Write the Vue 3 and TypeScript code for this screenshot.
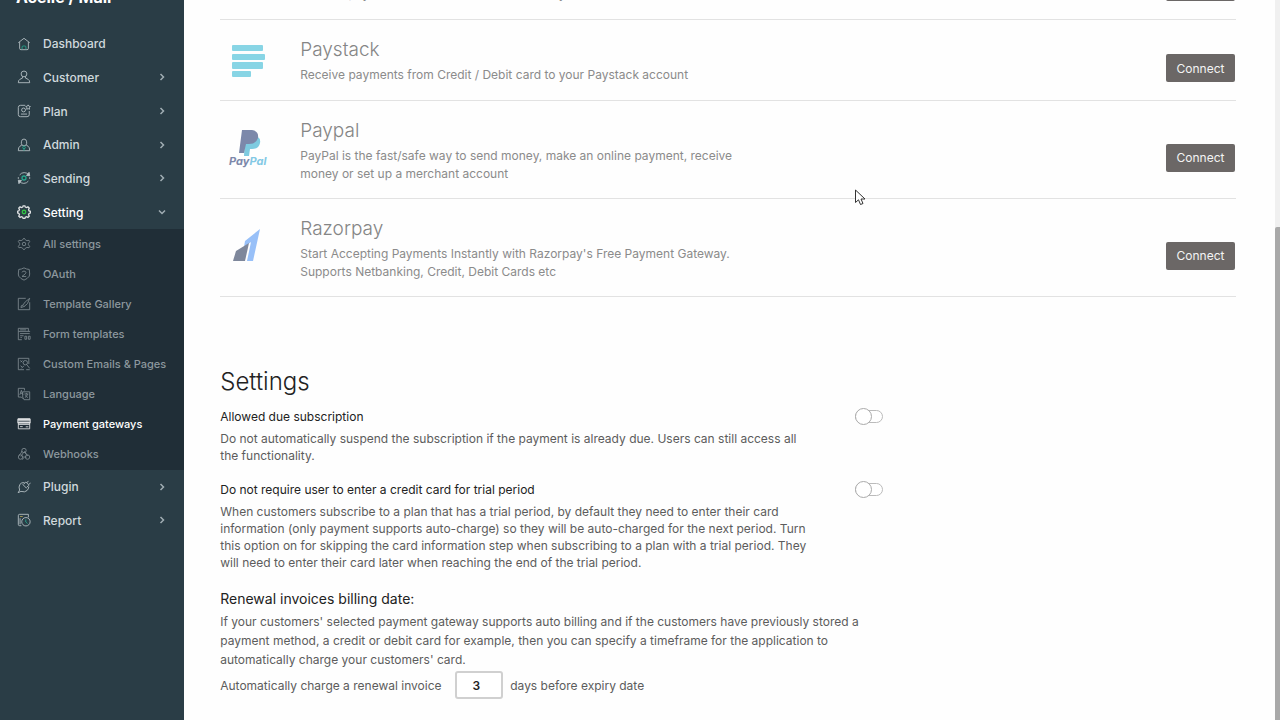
<script setup lang="ts">
interface NavItem {
  label: string
  icon: string
  chevron?: 'right' | 'down'
}

interface Gateway {
  name: string
  logo: 'paystack' | 'paypal' | 'razorpay' | 'none'
  lines: string[]
}

const mainNav: NavItem[] = [
  { label: 'Dashboard', icon: 'home' },
  { label: 'Customer', icon: 'user', chevron: 'right' },
  { label: 'Plan', icon: 'plan', chevron: 'right' },
  { label: 'Admin', icon: 'admin', chevron: 'right' },
  { label: 'Sending', icon: 'sending', chevron: 'right' },
  { label: 'Setting', icon: 'setting', chevron: 'down' },
]

const subNav: NavItem[] = [
  { label: 'All settings', icon: 'gear' },
  { label: 'OAuth', icon: 'oauth' },
  { label: 'Template Gallery', icon: 'template' },
  { label: 'Form templates', icon: 'form' },
  { label: 'Custom Emails & Pages', icon: 'emails' },
  { label: 'Language', icon: 'language' },
  { label: 'Payment gateways', icon: 'card' },
  { label: 'Webhooks', icon: 'webhook' },
]

const endNav: NavItem[] = [
  { label: 'Plugin', icon: 'plugin', chevron: 'right' },
  { label: 'Report', icon: 'report', chevron: 'right' },
]

const icons: Record<string, string> = {
  home: '<path d="M1.5 6.5 8 1.5l6.5 5M3 5.8V13q0 1.5 1.5 1.5h7Q13 14.5 13 13V5.8"/><path class="teal" d="M5.8 14v-2.5q0-1.2 1.2-1.2h2q1.2 0 1.2 1.2V14"/>',
  user: '<circle cx="8" cy="4.5" r="3.3"/><path d="M6.2 7.5v1.8L3.500 10.5Q1.5 11.5 1.5 14.5h13q0-3-2-4L9.8 9.3V7.5"/>',
  plan: '<path d="M9.500 1.5H4Q1.5 1.5 1.5 4v8q0 2.5 2.5 2.5h7.5q2.5 0 2.5-2.5V8M4.5 11.5h7"/><circle cx="7.5" cy="6.8" r="2.2"/><path d="m12.7 1 .9 1.5 1.7.4-1.2 1.3.2 1.8-1.6-.7-1.6.7.2-1.8L10 2.9l1.8-.4z"/>',
  admin: '<path d="M5 6.5V4.3Q5.3 1.2 8 1.2t3 3.1v2.2Q10.5 9 8 9T5 6.5M5.5 8 3.2 9.5Q1.5 10.5 1.5 14.5h13q0-4-1.7-5L10.5 8"/><circle class="teal" cx="8" cy="10.8" r="1.5"/><path class="teal" d="M8 12v2.5"/>',
  sending: '<path d="M3 4.5A6.5 6.5 0 0 1 13.500 4.5M13 11.5A6.5 6.5 0 0 1 2.5 11.5M1.5 7v2M14.5 7v2"/><path class="solid" d="m13.8 1.5.7 4-3.6-.4zM2.2 14.5l-.7-4 3.6.4z"/><circle class="teal thick" cx="8" cy="8" r="2.3"/>',
  setting: '<path class="thick" d="m6.500 2.400.5-1.500h2l.5 1.5 1.500.6 1.5-.8 1.500 1.5-.8 1.5.6 1.500 1.500.5v2l-1.500.5-.6 1.500.8 1.500-1.500 1.500-1.500-.8-1.500.6-.5 1.400H7l-.5-1.400-1.500-.6-1.500.8L2 12.600l.8-1.500-.6-1.500L.8 9.100v-2l1.400-.5.6-1.500L2 3.600l1.500-1.500 1.500.8z"/><circle class="green thick" cx="8" cy="8" r="2"/>',
  gear: '<path d="m6.500 3.200 1.500-2 1.500 2 1.800 1 2.500-.4.7 1.500-1.500 2v1.500l1.500 2-.8 1.500-2.400-.4-1.800 1-1.500 1.900-1.500-1.900-1.800-1-2.500.4-.7-1.500L3 8.800V7.200l-1.500-2 .8-1.400 2.400.4z"/><circle cx="8" cy="8" r="2"/>',
  oauth: '<path d="m8 1 3 1.300 3 .5.5 5.200-.5 2.500q-2 3-6 4.500-4-1.500-6-4.500L1.500 8 2 2.800l3-.5z"/><path d="M5.800 6.200Q6 4.700 8 4.700t2.200 1.600Q10.200 7.500 8 9l-2.300 1.800h4.800"/>',
  template: '<path d="M10 1.500H1.500v13h13V6M14.500 1.500l-5 4-3 4 1.500 1.500 4-3.500zM6.500 9.500Q4.500 9 4.500 12l3.300-1"/>',
  form: '<path d="M13 5V1.500H1.500V5H15M1.500 5v9.500h4M3.500 7.500h11M3.500 10h4M9 10.500h2v3.500H9zM13 10.500h2v3.500h-2zM4 12h1.500M3.500 3.300h7"/>',
  emails: '<path d="M13.500 8V1.500h-12v13H8M4 4l2 2M6 4 4 6M4 10l2 1.500M10.500 14.500h4"/><circle cx="9.500" cy="6.500" r="2.500"/><path d="m11 8.500 3.500 4.500M8 10l-3 3"/>',
  language: '<path d="M8.500 4V1.500h-7v10H5M3.200 9 5 3.800 6.800 9M4 7.200h2"/><path d="M6.500 5.500h8v9H8l-1.500-3zM8.500 8H13M10.700 6.800V8M12 8q-.5 3-3 4M9.500 9.500q1 2 3 2.500M5 11.500l2 2"/>',
  card: '<path class="solid" d="M1 2h14v5H1z"/><path d="M1.500 2.500h13v11h-13zM1.500 8.500h13M3.500 11h3M10 11.200h3"/><path class="dark" d="M1.500 4.800h13"/>',
  webhook: '<circle cx="4" cy="11.500" r="2.500"/><circle cx="12" cy="11.500" r="2.500"/><circle cx="8" cy="4" r="2.500"/><path d="m7.500 6-3 5M9 5.800l3.300 4.500M6.500 11.500H11M5.500 4.500q0 3-3.500 5M8.500 4.500l2 4M5.500 13.500q1.500 1.200 2-.5"/>',
  plugin: '<path d="M8.500 3Q5 2.500 3.300 5q-1.800 3-.3 6.500l-1.700 3L4.500 13q4.500 1.500 7-1 2-2 2-4.500M6.500 5l4.500 4.500M7.500 4.800 10 2.500q2 .5 3.500 3.500L11 8.500M11.500 3l1.500-2M13.500 5l2-1.500"/>',
  report: '<path d="M5 14.500H3Q1.500 14.500 1.500 13V3Q1.500 1.500 3 1.500h10V5M3.500 6v7"/><path class="gold" d="M3.500 4h3"/><circle cx="10.200" cy="10" r="4.800"/><path class="teal" d="M10 7.300v3l2 1.700"/>',
}

const gateways: Gateway[] = [
  { name: 'Braintree', logo: 'none', lines: ['Receive payments from Credit / Debit card to your Braintree account'] },
  { name: 'Paystack', logo: 'paystack', lines: ['Receive payments from Credit / Debit card to your Paystack account'] },
  {
    name: 'Paypal',
    logo: 'paypal',
    lines: ['PayPal is the fast/safe way to send money, make an online payment, receive', 'money or set up a merchant account'],
  },
  {
    name: 'Razorpay',
    logo: 'razorpay',
    lines: ["Start Accepting Payments Instantly with Razorpay's Free Payment Gateway.", 'Supports Netbanking, Credit, Debit Cards etc'],
  },
]
</script>

<template>
  <div class="app">
    <aside class="sidebar">
      <a class="brand" href="#">Acelle / Mail</a>
      <nav>
        <div class="group main-group">
          <a v-for="n in mainNav" :key="n.label" href="#" class="item" :class="{ on: n.chevron === 'down' }">
            <svg class="icon" viewBox="0 0 16 16" v-html="icons[n.icon]"></svg>
            <span>{{ n.label }}</span>
            <svg v-if="n.chevron" class="chevron" :class="n.chevron" viewBox="0 0 8 8"><path d="m2.500 1 3 3-3 3" /></svg>
          </a>
        </div>
        <div class="submenu">
          <a v-for="n in subNav" :key="n.label" href="#" class="sub" :class="{ on: n.icon === 'card' }">
            <svg class="icon" viewBox="0 0 16 16" v-html="icons[n.icon]"></svg>
            <span>{{ n.label }}</span>
          </a>
        </div>
        <div class="group end-group">
          <a v-for="n in endNav" :key="n.label" href="#" class="item">
            <svg class="icon" viewBox="0 0 16 16" v-html="icons[n.icon]"></svg>
            <span>{{ n.label }}</span>
            <svg class="chevron" viewBox="0 0 8 8"><path d="m2.500 1 3 3-3 3" /></svg>
          </a>
        </div>
      </nav>
    </aside>

    <main class="content">
      <section class="gateways">
        <article v-for="g in gateways" :key="g.name" class="gateway">
          <div class="logo" :class="{ tall: g.lines.length > 1 }">
            <svg v-if="g.logo === 'paystack'" width="40" height="40" viewBox="0 0 40 40" fill="#88d5e5">
              <rect x="4" y="4" width="31" height="6" rx="1" />
              <rect x="4" y="13" width="33" height="6" rx="1" />
              <rect x="4" y="21" width="31" height="7" rx="1" />
              <rect x="4" y="30" width="19" height="6" rx="1" />
            </svg>
            <svg v-else-if="g.logo === 'paypal'" width="40" height="40" viewBox="0 0 40 40">
              <path fill="#7ecbe0" d="M17 8h12q4 3 3 7-1 6-8 6h-2l-1 7h-5z" />
              <path fill="#7c88aa" d="M14 2h10q7 1 6 8-2 6-9 6h-3l-2 9h-5z" />
              <text x="1" y="37" class="wordmark" fill="#7c88aa">Pay<tspan fill="#83c9e5">Pal</tspan></text>
            </svg>
            <svg v-else-if="g.logo === 'razorpay'" width="40" height="40" viewBox="0 0 40 40">
              <path fill="#98c0f8" d="M32 3 25 35h-6l4-19-7 5 1-6z" />
              <path fill="#7e879b" d="m21 17-4 18H5l3-10z" />
            </svg>
          </div>
          <div class="details">
            <h3>{{ g.name }}</h3>
            <p><span v-for="l in g.lines" :key="l" class="line">{{ l }}</span></p>
          </div>
          <button type="button" class="connect">Connect</button>
        </article>
      </section>

      <section class="settings">
        <h2>Settings</h2>
        <div class="option">
          <div class="option-text">
            <label for="due">Allowed due subscription</label>
            <p>
              <span class="line">Do not automatically suspend the subscription if the payment is already due. Users can still access all</span>
              <span class="line">the functionality.</span>
            </p>
          </div>
          <input id="due" type="checkbox" role="switch" class="switch" />
        </div>
        <div class="option">
          <div class="option-text">
            <label for="trial">Do not require user to enter a credit card for trial period</label>
            <p>
              <span class="line">When customers subscribe to a plan that has a trial period, by default they need to enter their card</span>
              <span class="line">information (only payment supports auto-charge) so they will be auto-charged for the next period. Turn</span>
              <span class="line">this option on for skipping the card information step when subscribing to a plan with a trial period. They</span>
              <span class="line">will need to enter their card later when reaching the end of the trial period.</span>
            </p>
          </div>
          <input id="trial" type="checkbox" role="switch" class="switch" />
        </div>
        <div class="renewal">
          <h4>Renewal invoices billing date:</h4>
          <p>
            <span class="line">If your customers' selected payment gateway supports auto billing and if the customers have previously stored a</span>
            <span class="line">payment method, a credit or debit card for example, then you can specify a timeframe for the application to</span>
            <span class="line">automatically charge your customers' card.</span>
          </p>
          <div class="days">
            <label for="days">Automatically charge a renewal invoice</label>
            <input id="days" type="text" value="3" />
            <span>days before expiry date</span>
          </div>
        </div>
      </section>
    </main>
    <div class="scrollbar"><div class="thumb"></div></div>
    <svg class="cursor" width="12" height="18" viewBox="0 0 12 18">
      <path d="M1.500 1v12.500l3-2.700 2 4.700 2.500-1-2-4.500H11z" fill="#fff" stroke="#333" />
    </svg>
  </div>
</template>

<style>
body {
  margin: 0;
  overflow: hidden;
}
</style>

<style scoped>
.app {
  position: relative;
  display: flex;
  height: 100vh;
  overflow: hidden;
  background: #fefefe;
  font-family: Inter, 'Open Sans', sans-serif;
  font-size: 12px;
  color: #5c5c5c;
}
.app * {
  box-sizing: border-box;
}
.sidebar {
  flex: 0 0 184px;
  background: #2a3d46;
}
.brand {
  display: block;
  height: 27px;
  margin-left: 16px;
  margin-top: -13px;
  margin-bottom: 13px;
  color: #fff;
  font-size: 16px;
  line-height: 20px;
  font-weight: 700;
  text-decoration: none;
}
.group {
  display: grid;
  grid-auto-rows: 1fr;
}
.main-group {
  height: 202px;
}
.end-group {
  height: 67px;
}
.item,
.sub {
  display: flex;
  align-items: center;
  gap: 11px;
  padding: 0 18px 0 16px;
  color: #d0d9dd;
  text-decoration: none;
  font-weight: 500;
  white-space: nowrap;
}
.item {
  font-size: 12px;
}
.sub {
  height: 30px;
  font-size: 11px;
  color: #8d989e;
}
.item.on,
.sub.on {
  color: #fff;
}
.submenu {
  padding-bottom: 1px;
  background: #202e37;
}
.icon {
  flex: none;
  width: 16px;
  height: 16px;
  padding: 1px;
  fill: none;
  stroke: currentColor;
  opacity: 0.85;
}
.icon :deep(.teal) {
  stroke: #27b99a;
}
.icon :deep(.green) {
  stroke: #35dc45;
}
.icon :deep(.gold) {
  stroke: #c8b55a;
}
.icon :deep(.dark) {
  stroke: #35434b;
}
.icon :deep(.thick) {
  stroke-width: 1.5;
}
.icon :deep(.solid) {
  fill: currentColor;
}
.chevron {
  width: 8px;
  height: 8px;
  margin-left: auto;
  fill: none;
  stroke: #a0adb3;
  stroke-width: 1.5;
}
.chevron.down {
  transform: rotate(90deg);
}
.content {
  flex: 1;
  min-width: 0;
  padding: 0 39px 0 36px;
  margin-top: -61px;
}
.gateway {
  display: flex;
  align-items: flex-start;
  min-height: 81px;
  padding: 17px 1px 15px 0;
  border-bottom: 1px solid #e2e2e2;
}
.logo {
  flex: 0 0 80px;
  padding: 4px 8px 0;
}
.logo svg {
  display: block;
}
.logo.tall {
  padding-top: 10px;
}
.wordmark {
  font-size: 11px;
  font-weight: 700;
  font-style: italic;
}
.details {
  flex: 1;
}
h2,
h3,
h4,
p {
  margin: 0;
}
.line {
  display: block;
  white-space: nowrap;
}
h3 {
  color: #858585;
  font-size: 19px;
  line-height: 26px;
  font-weight: 300;
}
.details p {
  padding-top: 3px;
  line-height: 18px;
  color: #8b8b8b;
}
.connect {
  align-self: center;
  width: 69px;
  height: 28px;
  margin-top: 14px;
  padding: 0;
  border: 0;
  border-radius: 2px;
  background: #6b6766;
  color: #f4f4f4;
  font: inherit;
}
.settings {
  padding-top: 69px;
}
h2 {
  color: #222;
  font-size: 24px;
  line-height: 32px;
  font-weight: 300;
}
.option {
  display: flex;
  align-items: flex-start;
  margin-bottom: 17px;
}
.option-text {
  flex: 0 0 635px;
}
.option label {
  display: block;
  color: #222;
  line-height: 18px;
}
.option p {
  padding-top: 4px;
  line-height: 17px;
}
.option:first-of-type {
  padding-top: 10px;
}
.switch {
  position: relative;
  appearance: none;
  width: 28px;
  height: 13px;
  margin: 2px 0;
  border: 1px solid #bbb;
  border-radius: 7px;
  background: #fff;
}
.switch::before {
  content: '';
  position: absolute;
  left: -1px;
  top: -3px;
  width: 17px;
  height: 17px;
  box-sizing: border-box;
  border: 1px solid #aaa;
  border-radius: 50%;
  background: #fff;
}
h4 {
  padding-bottom: 2px;
  color: #222;
  font-size: 14px;
  line-height: 22px;
  font-weight: 400;
}
.renewal p {
  line-height: 19px;
}
.days {
  display: flex;
  align-items: center;
  gap: 7px;
  padding-top: 2px;
}
.days label {
  flex: 0 0 228px;
}
.days input {
  width: 48px;
  height: 28px;
  padding: 0 6px 0 0;
  border: 2px solid #d0d0d0;
  border-radius: 3px;
  background: #fff;
  color: #222;
  font: inherit;
  font-weight: 600;
  text-align: center;
}
.scrollbar {
  flex: 0 0 5px;
  padding-top: 227px;
  background: #f0f0f0;
}
.thumb {
  height: 100%;
  border-radius: 2px 0 0;
  background: #a9a9a9;
}
.cursor {
  position: absolute;
  left: 854px;
  top: 189px;
}
</style>
